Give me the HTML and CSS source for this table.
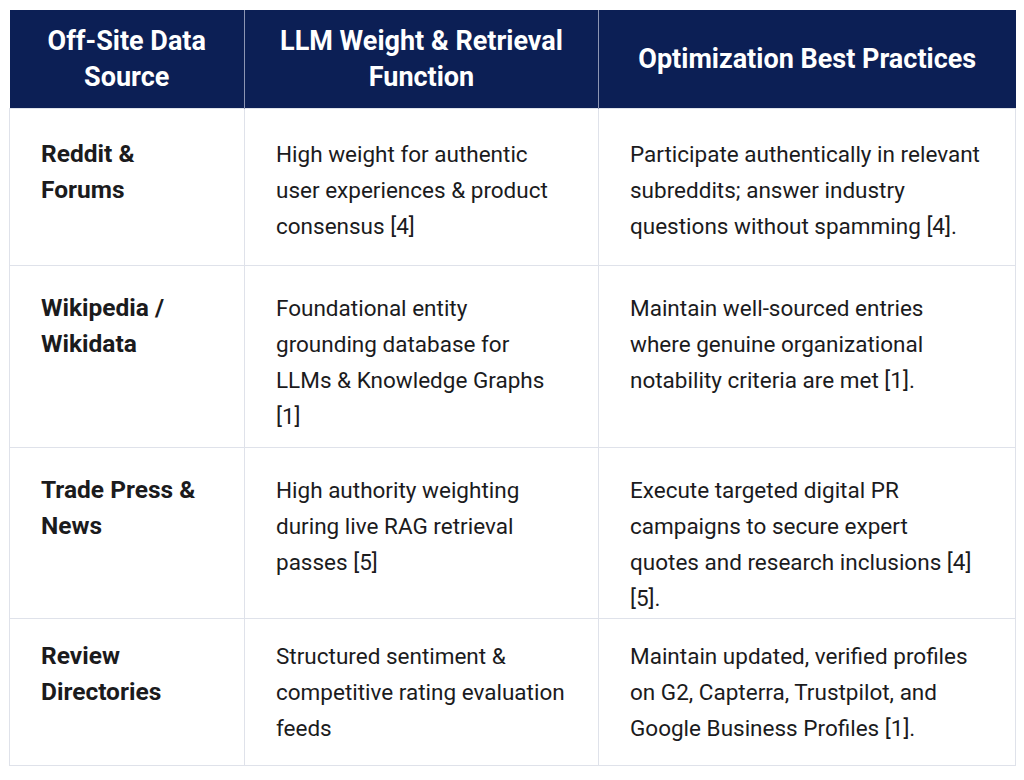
FILE: index.html
```html
<!DOCTYPE html>
<html lang="en">
<head>
<meta charset="utf-8">
<title>Off-Site Data Sources</title>
<link rel="stylesheet" href="styles.css">
</head>
<body>
<div class="page">
<table class="grid">
<colgroup>
<col class="c1"><col class="c2"><col class="c3">
</colgroup>
<thead>
<tr class="head">
<th>Off-Site Data<br>Source</th>
<th>LLM Weight &amp; Retrieval<br>Function</th>
<th>Optimization Best Practices</th>
</tr>
</thead>
<tbody>
<tr class="r1">
<td class="src">Reddit &amp;<br>Forums</td>
<td>High weight for authentic<br>user experiences &amp; product<br>consensus [4]</td>
<td>Participate authentically in relevant<br>subreddits; answer industry<br>questions without spamming [4].</td>
</tr>
<tr class="r2">
<td class="src">Wikipedia /<br>Wikidata</td>
<td>Foundational entity<br>grounding database for<br>LLMs &amp; Knowledge Graphs<br>[1]</td>
<td>Maintain well-sourced entries<br>where genuine organizational<br>notability criteria are met [1].</td>
</tr>
<tr class="r3">
<td class="src">Trade Press &amp;<br>News</td>
<td>High authority weighting<br>during live RAG retrieval<br>passes [5]</td>
<td>Execute targeted digital PR<br>campaigns to secure expert<br>quotes and research inclusions [4]<br>[5].</td>
</tr>
<tr class="r4">
<td class="src">Review<br>Directories</td>
<td>Structured sentiment &amp;<br>competitive rating evaluation<br>feeds</td>
<td>Maintain updated, verified profiles<br>on G2, Capterra, Trustpilot, and<br>Google Business Profiles [1].</td>
</tr>
</tbody>
</table>
</div>
</body>
</html>
```
FILE: styles.css
```css
html, body {
  margin: 0;
  padding: 0;
  background: #ffffff;
}
.page {
  padding: 10px 9px 0 9px;
  font-family: Roboto, "Liberation Sans", sans-serif;
  color: #1b1b1d;
}
.grid {
  width: 1006px;
  border-collapse: collapse;
  table-layout: fixed;
}
.c1 { width: 235px; }
.c2 { width: 354px; }
.c3 { width: 417px; }
.grid th {
  background: #0c1f55;
  color: #ffffff;
  font-weight: 700;
  font-size: 27px;
  line-height: 36px;
  text-align: center;
  vertical-align: middle;
  padding: 0 4px;
  border-left: 1px solid #8c95b3;
}
.grid th:first-child { border-left: none; }
.head { height: 98px; }
.grid td {
  border: 1px solid #dfe2ea;
  font-size: 22.5px;
  line-height: 36px;
  vertical-align: top;
  white-space: nowrap;
  padding: 26px 4px 0 31px;
}
.grid td.src { font-weight: 700; font-size: 24.5px; }
.r1 { height: 157px; }
.r1 td { padding-top: 27px; }
.r2 { height: 182px; }
.r2 td { padding-top: 24px; }
.r3 { height: 171px; }
.r3 td { padding-top: 24px; }
.r4 { height: 147px; }
.r4 td { padding-top: 19px; }
```
